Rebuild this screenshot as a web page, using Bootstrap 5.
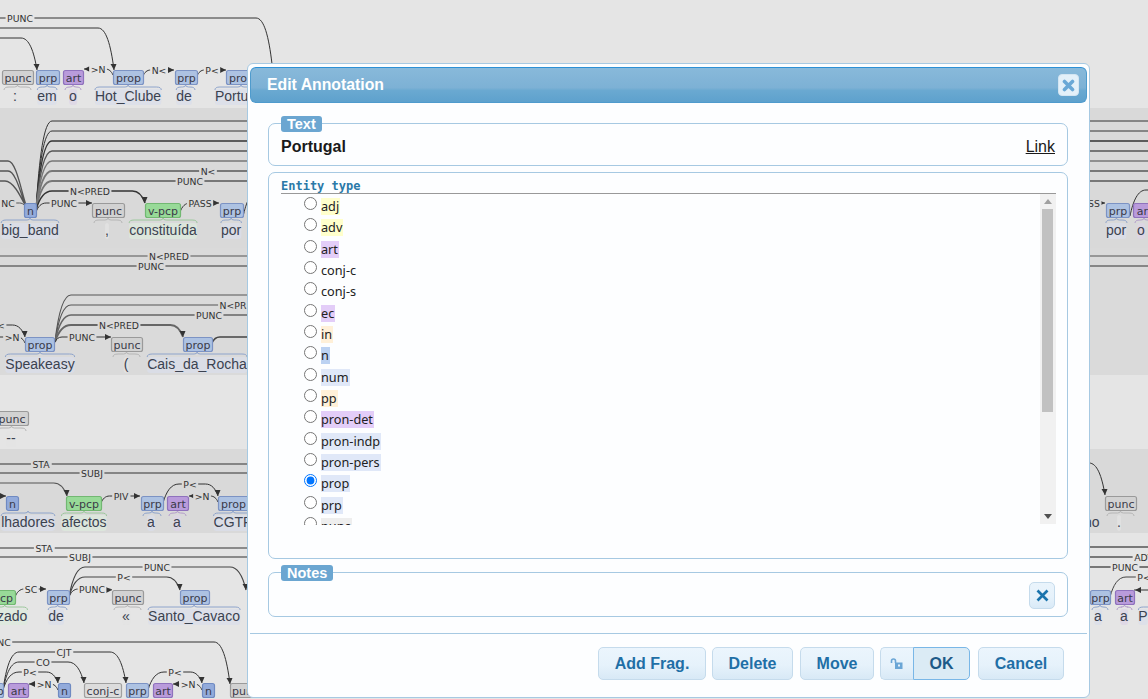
<!DOCTYPE html>
<html lang="en">
<head>
  <meta charset="UTF-8">
  <title>Edit Annotation</title>
  <meta name="viewport" content="width=device-width, initial-scale=1">
  <link href="https://cdn.jsdelivr.net/npm/bootstrap@5.3.0/dist/css/bootstrap.min.css" rel="stylesheet">
  <style>
    html, body { height: 100%; overflow: hidden; }
    body { background: #e5e5e5; font-family: "Liberation Sans", Arial, sans-serif; color: #1a1a1a; }
    #diagram { position: absolute; left: 0; top: 0; width: 1148px; height: 699px; }
    #diagram .tok { font: 14px "Liberation Sans", Arial, sans-serif; fill: #3b4250; }
    #diagram .box-label { font: 11px "DejaVu Sans", sans-serif; fill: #3a3a48; }
    #diagram .arc-label { font: 9.3px "DejaVu Sans", sans-serif; fill: #333; }

    .dlg { position: absolute; left: 247px; top: 63px; width: 843px; height: 635px; background: #fdfeff; border: 1px solid #a6c9e2; border-radius: 6px; padding: 3px 2px; }
    .dlg-title { height: 36px; padding: 0 7px 0 16px; border: 1px solid #4f9bcd; border-top-color: #2b90d6; border-radius: 6px; color: #fff; font-weight: 700; font-size: 15.8px; background: linear-gradient(#88b9da 0%, #7db1d5 58%, #6aa9d1 66%, #5ea1cd 100%); }
    .dlg-close { width: 21px; height: 22px; padding: 0; border: 1px solid #d3e5f2; border-radius: 4px; background: #e3f0f9; }
    .dlg-body { padding: 12px 19px 0 18px; }
    .fset { border: 1px solid #a6c9e2; border-radius: 7px; padding: 0 12px; margin-bottom: 6px; min-width: 0; }
    .fset legend { float: none; width: auto; height: 16px; margin: 0; padding: 0 6px; background: #6ba6d1; border-radius: 3px; color: #fff; font-size: 14.5px; font-weight: 700; line-height: 16px; position: relative; top: 1px; }
    .fset-text { height: 51px; }
    .fset-text .txt-row { font-size: 16px; line-height: 18px; padding-top: 7px; }
    .fset-text a { color: #1a1a1a; }
    .fset-type { height: 387px; padding: 6px 11px 0 12px; margin-bottom: 5px; }
    .fset-notes { height: 53px; margin-bottom: 0; }
    .type-head { font: 700 12px/14px "DejaVu Sans Mono", monospace; color: #2a79a8; border-bottom: 1px solid #999; height: 15px; }
    .type-list { height: 331px; overflow: hidden; padding-left: 23px; padding-top: 1px; }
    .type-row { height: 21.35px; display: flex; align-items: flex-start; font: 12.7px/17px "Noto Sans", sans-serif; color: #222; }
    .type-row input { width: 13px; height: 13px; margin: 2px 4px 0 0; flex: none; }
    .type-row label { padding: 0 1px 0 0; margin-top: 3px; }
    .t-yellow { background: #ffffcc; }
    .t-purple { background: #e3cdf8; }
    .t-orange { background: #fff0d8; }
    .t-blue { background: #bcd2f2; }
    .t-pale { background: #e0e8f8; }
    .t-grey { background: #eeeeee; }
    .fake-bar { width: 16px; height: 330px; flex: none; background: #f1f1f1; }
    .fake-bar .arrow-up { width: 0; height: 0; border-left: 4px solid transparent; border-right: 4px solid transparent; border-bottom: 5px solid #a0a0a0; }
    .fake-bar .arrow-down { width: 0; height: 0; border-left: 4px solid transparent; border-right: 4px solid transparent; border-top: 5px solid #505050; }
    .fake-bar .bar-top { height: 15px; }
    .fake-bar .bar-thumb { height: 203px; width: 11px; margin-left: 2px; background: #c1c1c1; }
    .fake-bar .bar-end { height: 112px; padding-bottom: 5px; }
    .notes-x { width: 26px; height: 27px; padding: 0; margin-top: 2px; border: 1px solid #c5dbec; border-radius: 5px; background: linear-gradient(#eaf4fc 0%, #e6f2fb 55%, #d9eaf7 100%); }
    .dlg-foot { margin-top: 16px; border-top: 1px solid #a6c9e2; padding: 13px 23px 0 0; }
    .act { height: 33px; padding: 0; font-size: 16px; font-weight: 700; color: #1f6fa6; border: 1px solid #c5dbec; border-radius: 5px; background: linear-gradient(#ebf5fd 0%, #e6f2fb 55%, #d8e9f6 100%); }
    .act:hover { color: #1f6fa6; border-color: #c5dbec; }
    .act-add { width: 108px; }
    .act-del { width: 81px; margin-left: 6px; }
    .act-move { width: 74px; margin-left: 7px; }
    .act-lock { width: 33px; margin-left: 6px; border-radius: 5px 0 0 5px; border-right: 0; }
    .act-ok { width: 57px; border-radius: 0 5px 5px 0; border-color: #79b7e7; background: #dbebf5; color: #1d5a88; }
    .act-cancel { width: 86px; margin-left: 8px; }
  </style>
</head>
<body>
  <!-- annotation canvas behind the dialog -->
  <svg id="diagram" xmlns="http://www.w3.org/2000/svg" viewBox="0 0 1148 699"></svg>

  <div class="dlg d-flex flex-column">
    <div class="dlg-title d-flex align-items-center justify-content-between">
      <span>Edit Annotation</span>
      <button class="btn dlg-close d-flex align-items-center justify-content-center" type="button" aria-label="Close">
        <svg width="13" height="13" viewBox="0 0 13 13"><path d="M2.500 2.500l8 8M10.500 2.500l-8 8" stroke="#6aa8d6" stroke-width="3.600" stroke-linecap="round"/></svg>
      </button>
    </div>

    <div class="dlg-body">
      <fieldset class="fset fset-text">
        <legend>Text</legend>
        <div class="txt-row d-flex justify-content-between">
          <strong>Portugal</strong>
          <a href="#">Link</a>
        </div>
      </fieldset>

      <fieldset class="fset fset-type">
        <div class="type-head">Entity type</div>
        <div class="d-flex">
          <div class="type-list flex-grow-1" id="type-list"></div>
          <div class="fake-bar">
            <div class="bar-top d-flex align-items-center justify-content-center"><span class="arrow-up"></span></div>
            <div class="bar-thumb"></div>
            <div class="bar-end d-flex align-items-end justify-content-center"><span class="arrow-down"></span></div>
          </div>
        </div>
      </fieldset>

      <fieldset class="fset fset-notes">
        <legend>Notes</legend>
        <div class="d-flex justify-content-end">
          <button class="btn notes-x d-flex align-items-center justify-content-center" type="button" aria-label="Clear">
            <svg width="13" height="13" viewBox="0 0 13 13"><path d="M1.500 1.500l10 10M11.500 1.500l-10 10" stroke="#1a74ad" stroke-width="2.700"/></svg>
          </button>
        </div>
      </fieldset>
    </div>

    <div class="dlg-foot d-flex justify-content-end">
      <button class="btn act act-add" type="button">Add Frag.</button>
      <button class="btn act act-del" type="button">Delete</button>
      <button class="btn act act-move" type="button">Move</button>
      <button class="btn act act-lock d-flex align-items-center justify-content-center" type="button" aria-label="Lock">
        <svg width="14" height="12" viewBox="0 0 14 12"><path d="M1.500 5V3a2 2 0 0 1 4 0v2" fill="none" stroke="#6ba6d6" stroke-width="1.600"/><rect x="5" y="4.500" width="7.500" height="6.500" fill="#6ba6d6"/><rect x="8" y="6.500" width="2" height="2" fill="#e6f2fb"/></svg>
      </button>
      <button class="btn act act-ok" type="button">OK</button>
      <button class="btn act act-cancel" type="button">Cancel</button>
    </div>
  </div>

  <script src="https://cdn.jsdelivr.net/npm/bootstrap@5.3.0/dist/js/bootstrap.bundle.min.js"></script>
  <script>
    // entity type list
    const types = [
      ['adj', 't-yellow'], ['adv', 't-yellow'], ['art', 't-purple'], ['conj-c', ''], ['conj-s', ''],
      ['ec', 't-purple'], ['in', 't-orange'], ['n', 't-blue'], ['num', 't-pale'], ['pp', 't-orange'],
      ['pron-det', 't-purple'], ['pron-indp', 't-pale'], ['pron-pers', 't-pale'], ['prop', 't-pale'],
      ['prp', 't-pale'], ['punc', 't-grey']
    ];
    document.getElementById('type-list').innerHTML = types.map((t, i) => `
      <div class="type-row">
        <input type="radio" name="etype" id="et${i}" ${t[0] === 'prop' ? 'checked' : ''}>
        <label for="et${i}" class="${t[1]}">${t[0]}</label>
      </div>`).join('');

    // diagram
    const NS = 'http://www.w3.org/2000/svg';
    const svg = document.getElementById('diagram');
    function el(name, attrs, text) {
      const e = document.createElementNS(NS, name);
      for (const k in attrs) e.setAttribute(k, attrs[k]);
      if (text !== undefined) e.textContent = text;
      svg.appendChild(e);
      return e;
    }

    const bands = [[0, 108, '#e5e5e5'], [108, 140, '#d9d9d9'], [248, 127, '#dadada'], [375, 74, '#e5e5e5'], [449, 84, '#d9d9d9'], [533, 166, '#e5e5e5']];
    bands.forEach(b => el('rect', { x: 0, y: b[0], width: 1148, height: b[1], fill: b[2] }));

    const styles = {
      prp: ['#adc2e2', '#7c93c4', '#8ea4cc'], prop: ['#adc2e2', '#7c93c4', '#8ea4cc'], n: ['#93abdb', '#6f8ac2', '#8ea4cc'],
      art: ['#b99bdb', '#8f72bd', '#b39ccb'], punc: ['#d2d2d2', '#9a9a9a', '#b5b5b5'], vpcp: ['#98da98', '#72b872', '#9cc89c'],
      conj: ['#dcdcdc', '#a0a0a0', '#b5b5b5']
    };

    // [boxX, boxW, label, style, word, wordCenter]; drop = word baseline below box top
    function token(y, t, drop) {
      const s = styles[t[3]];
      const cx = t[0] + t[1] / 2;
      if (t[4]) {
        const base = y + (drop || 31);
        const w = el('text', { class: 'tok', x: t[5], y: base, 'text-anchor': 'middle' }, t[4]);
        const bb = w.getBBox();
        const bgc = t[3] === 'vpcp' ? '#dceadc' : t[3] === 'punc' ? '#e3e3e3' : t[3] === 'art' ? '#dcd4e6' : '#d9deea';
        const r = el('rect', { x: bb.x, y: bb.y + 1, width: bb.width, height: bb.height, rx: 3, fill: bgc, opacity: .75 });
        svg.insertBefore(r, w);
        const x1 = Math.min(bb.x, t[0] + 2), x2 = Math.max(bb.x + bb.width, t[0] + t[1] - 2);
        const ty = y + 17;
        const m = (x1 + x2) / 2;
        el('path', { d: `M${x1},${ty + 3} Q${x1},${ty} ${x1 + 5},${ty} L${m - 3},${ty} Q${m},${ty} ${m},${ty - 2} Q${m},${ty} ${m + 3},${ty} L${x2 - 5},${ty} Q${x2},${ty} ${x2},${ty + 3}`, fill: 'none', stroke: s[2], 'stroke-width': 1 });
      }
      el('rect', { x: t[0] + .5, y: y + .5, width: t[1], height: 14, rx: 2, fill: s[0], stroke: s[1], 'stroke-width': 1.2 });
      el('text', { class: 'box-label', x: cx + .5, y: y + 11.5, 'text-anchor': 'middle' }, t[2]);
    }

    // arc from (x1,y1) over level h to (x2,y2); o: lab, lx, end ('d','r','l'), w, c
    function arc(x1, y1, x2, y2, h, o) {
      o = o || {};
      const k1 = Math.min(Math.abs(y1 - h) * .8 + 3, 16), k2 = Math.min(Math.abs(y2 - h) * .8 + 3, 16);
      let d = `M${x1},${y1} `;
      if (y1 !== h) d += `C${x1 + k1 * .2},${h + (y1 - h) * .4} ${x1 + k1 * .5},${h} ${x1 + k1},${h} `;
      if (y2 !== h) d += `L${x2 - k2},${h} C${x2 - k2 * .5},${h} ${x2 - k2 * .2},${h + (y2 - h) * .4} ${x2},${y2}`;
      else d += `L${x2},${h}`;
      el('path', { d, fill: 'none', stroke: o.c || '#333', 'stroke-width': o.w || 1 });
      if (o.end === 'd') el('path', { d: `M${x2 - 3.500},${y2 - 6} L${x2 + 2.500},${y2 - 6} L${x2},${y2} Z`, fill: '#333' });
      if (o.end === 'r') el('path', { d: `M${x2 - 6},${y2 - 3} L${x2 - 6},${y2 + 3} L${x2},${y2} Z`, fill: '#333' });
      if (o.end === 'l') el('path', { d: `M${x1 + 6},${y1 - 3} L${x1 + 6},${y1 + 3} L${x1},${y1} Z`, fill: '#333' });
      if (o.lab) {
        const t = el('text', { class: 'arc-label', x: o.lx, y: h + 3.500, 'text-anchor': 'middle' }, o.lab);
        const bb = t.getBBox();
        const r = el('rect', { x: bb.x - 1.500, y: h - 5, width: bb.width + 3, height: 10, fill: o.bg || '#e5e5e5' });
        svg.insertBefore(r, t);
      }
    }
    const DK = '#d9d9d9';

    // sentence 1
    arc(-5, 18, 272, 64, 18, { lab: 'PUNC', lx: 20 });
    arc(-5, 28, 114, 70, 28, { end: 'd' });
    arc(-5, 38, 37, 70, 38, { end: 'd' });
    arc(84, 69, 113, 75, 69, { lab: '>N', lx: 98, end: 'l' });
    arc(143, 76, 174, 70, 70, { lab: 'N<', lx: 159, end: 'r' });
    arc(197, 76, 226, 70, 70, { lab: 'P<', lx: 212, end: 'r' });
    [[2, 31, 'punc', 'punc', ':', 15], [36, 23, 'prp', 'prp', 'em', 47], [63, 20, 'art', 'art', 'o', 73],
     [113, 30, 'prop', 'prop', 'Hot_Clube', 128], [175, 22, 'prp', 'prp', 'de', 184], [226, 30, 'prop', 'prop', 'Portugal', 241]]
      .forEach(t => token(70, t));

    // sentence 2
    [[121, 1, '#333'], [131, 1, '#333'], [141, 1.400, '#333'], [151, 1.400, '#555'], [161, 1.600, '#777'],
     [171, 1.800, '#777', 'N<', 208], [181, 1.800, '#777', 'PUNC', 190]].forEach(l => {
      arc(36, 210, 1148, l[0], l[0], { w: l[1], c: l[2], lab: l[3], lx: l[4], bg: DK });
    });
    el('path', { d: 'M0,161 L8,161 C16,161 21,190 26,205 M0,171 L8,171 C15,171 20,190 25,205 M0,181 L5,181 C13,181 20,195 25,205', fill: 'none', stroke: '#555', 'stroke-width': 1.300 });
    arc(-5, 203, 24, 205, 203, { lab: 'NC', lx: 8, bg: DK, c: '#555' });
    arc(36, 210, 145, 203, 191, { lab: 'N<PRED', lx: 90, bg: DK, end: 'd', w: 1.400 });
    arc(36, 212, 92, 203, 203, { lab: 'PUNC', lx: 64, bg: DK, end: 'r' });
    arc(180, 212, 219, 203, 203, { lab: 'PASS', lx: 200, bg: DK, end: 'r' });
    arc(243, 217, 262, 191, 191, {});
    arc(1085, 203, 1105, 203, 203, { lab: 'SS', lx: 1094, bg: DK, end: 'r' });
    arc(1130, 216, 1160, 190, 190, {});
    [[24, 12, 'n', 'n', 'big_band', 30], [92, 32, 'punc', 'punc', ',', 107], [145, 35, 'v-pcp', 'vpcp', 'constituída', 163], [220, 23, 'prp', 'prp', 'por', 231],
     [1106, 23, 'prp', 'prp', 'por', 1116], [1133, 22, 'art', 'art', 'o', 1141]].forEach(t => token(203, t, 32));

    // sentence 3
    arc(-5, 256, 1148, 256, 256, { lab: 'N<PRED', lx: 169, bg: '#dadada', w: 1.200, c: '#555' });
    arc(-5, 266, 1148, 266, 266, { lab: 'PUNC', lx: 151, bg: '#dadada', w: 1.200, c: '#333' });
    arc(55, 342, 262, 295, 295, { w: 1.200, c: '#555' });
    arc(55, 342, 262, 305, 305, { lab: 'N<PR', lx: 233, bg: '#dadada', w: 1.200, c: '#555' });
    arc(55, 342, 262, 315, 315, { lab: 'PUNC', lx: 209, bg: '#dadada', w: 1.600, c: '#666' });
    arc(55, 342, 183, 337, 325, { lab: 'N<PRED', lx: 119, bg: '#dadada', end: 'd', w: 1.800, c: '#666' });
    arc(55, 342, 111, 337, 337, { lab: 'PUNC', lx: 82, bg: '#dadada', end: 'r' });
    arc(-5, 325, 25, 337, 325, { end: 'd', lab: '<', lx: 1, bg: '#dadada' });
    arc(-5, 337, 25, 343, 337, { lab: '>N', lx: 12, bg: '#dadada' });
    arc(212, 343, 262, 337, 337, { w: 1.400, c: '#444' });
    [[25, 29, 'prop', 'prop', 'Speakeasy', 40], [111, 31, 'punc', 'punc', '(', 126], [183, 29, 'prop', 'prop', 'Cais_da_Rocha', 197]].forEach(t => token(337, t, 32));

    // sentence 4
    token(411, [-5, 33, 'punc', 'punc', '--', 11], 32);

    // sentence 5
    arc(-5, 464, 262, 464, 464, { lab: 'STA', lx: 41, bg: DK, w: 1.200 });
    arc(-5, 473, 262, 473, 473, { lab: 'SUBJ', lx: 92, bg: DK, w: 1.200 });
    arc(-5, 483, 67, 496, 483, { end: 'd', w: 1.200, c: '#555' });
    arc(-5, 496, 6, 496, 496, { end: 'r' });
    arc(101, 503, 140, 496, 496, { lab: 'PIV', lx: 121, bg: DK, end: 'r' });
    arc(163, 503, 218, 496, 484, { lab: 'P<', lx: 190, bg: DK, end: 'd' });
    arc(189, 496, 218, 502, 496, { lab: '>N', lx: 202, bg: DK, end: 'l' });
    arc(1070, 463, 1105, 495, 463, { end: 'd' });
    [[6, 12, 'n', 'n', 'lhadores', 28], [66, 35, 'v-pcp', 'vpcp', 'afectos', 84], [141, 22, 'prp', 'prp', 'a', 151], [167, 21, 'art', 'art', 'a', 177], [218, 30, 'prop', 'prop', 'CGTP', 233],
     [1105, 31, 'punc', 'punc', '.', 1119]].forEach(t => token(496, t));
    el('text', { class: 'tok', x: 1084, y: 527 }, 'no');

    // sentence 6
    arc(-5, 548, 262, 548, 548, { lab: 'STA', lx: 44, w: 1.200 });
    arc(-5, 557, 262, 557, 557, { lab: 'SUBJ', lx: 80, w: 1.200 });
    arc(69, 597, 246, 590, 567, { lab: 'PUNC', lx: 157, end: 'd', w: 1.200, c: '#444' });
    arc(69, 597, 180, 590, 577, { lab: 'P<', lx: 124, end: 'd', w: 1.200, c: '#444' });
    arc(69, 597, 112, 590, 589, { lab: 'PUNC', lx: 92, end: 'r' });
    arc(15, 597, 46, 589, 589, { lab: 'SC', lx: 31, end: 'r' });
    arc(1085, 547, 1148, 547, 547, { w: 1.400, c: '#555' });
    arc(1085, 557, 1148, 557, 557, { lab: 'ADV', lx: 1144, w: 1.400, c: '#555' });
    arc(1085, 567, 1148, 567, 567, { lab: 'PUNC', lx: 1125, w: 1.800, c: '#777' });
    arc(1110, 597, 1160, 577, 577, { lab: 'P<', lx: 1144, c: '#444' });
    el('path', { d: 'M1134,590 L1148,590', stroke: '#333', fill: 'none' });
    el('path', { d: 'M1135,590 L1141,587 L1141,593 Z', fill: '#333' });
    [[-20, 35, 'v-pcp', 'vpcp', 'lizado', 9], [47, 22, 'prp', 'prp', 'de', 56], [112, 31, 'punc', 'punc', '«', 126], [180, 29, 'prop', 'prop', 'Santo_Cavaco', 194],
     [1090, 20, 'prp', 'prp', 'a', 1098], [1115, 19, 'art', 'art', 'a', 1124], [1150, 22, 'prop', 'prop', 'P', 1143]].forEach(t => token(590, t));

    // sentence 7
    arc(-5, 642, 230, 684, 642, { lab: 'NC', lx: 4, end: 'd' });
    arc(3, 690, 126, 683, 652, { lab: 'CJT', lx: 64, end: 'd' });
    arc(3, 690, 84, 683, 662, { lab: 'CO', lx: 43, end: 'd' });
    arc(3, 690, 58, 683, 672, { lab: 'P<', lx: 30, end: 'd' });
    arc(29, 684, 58, 690, 684, { lab: '>N', lx: 44, end: 'l' });
    arc(148, 690, 202, 683, 672, { lab: 'P<', lx: 175, end: 'd' });
    arc(173, 684, 202, 690, 684, { lab: '>N', lx: 188, end: 'l' });
    [[-15, 18, 'prp', 'prp'], [8, 20, 'art', 'art'], [58, 12, 'n', 'n'], [84, 37, 'conj-c', 'conj'], [126, 22, 'prp', 'prp'], [153, 19, 'art', 'art'], [202, 12, 'n', 'n'], [230, 30, 'punc', 'punc']]
      .forEach(t => token(683, t));
  </script>
</body>
</html>
